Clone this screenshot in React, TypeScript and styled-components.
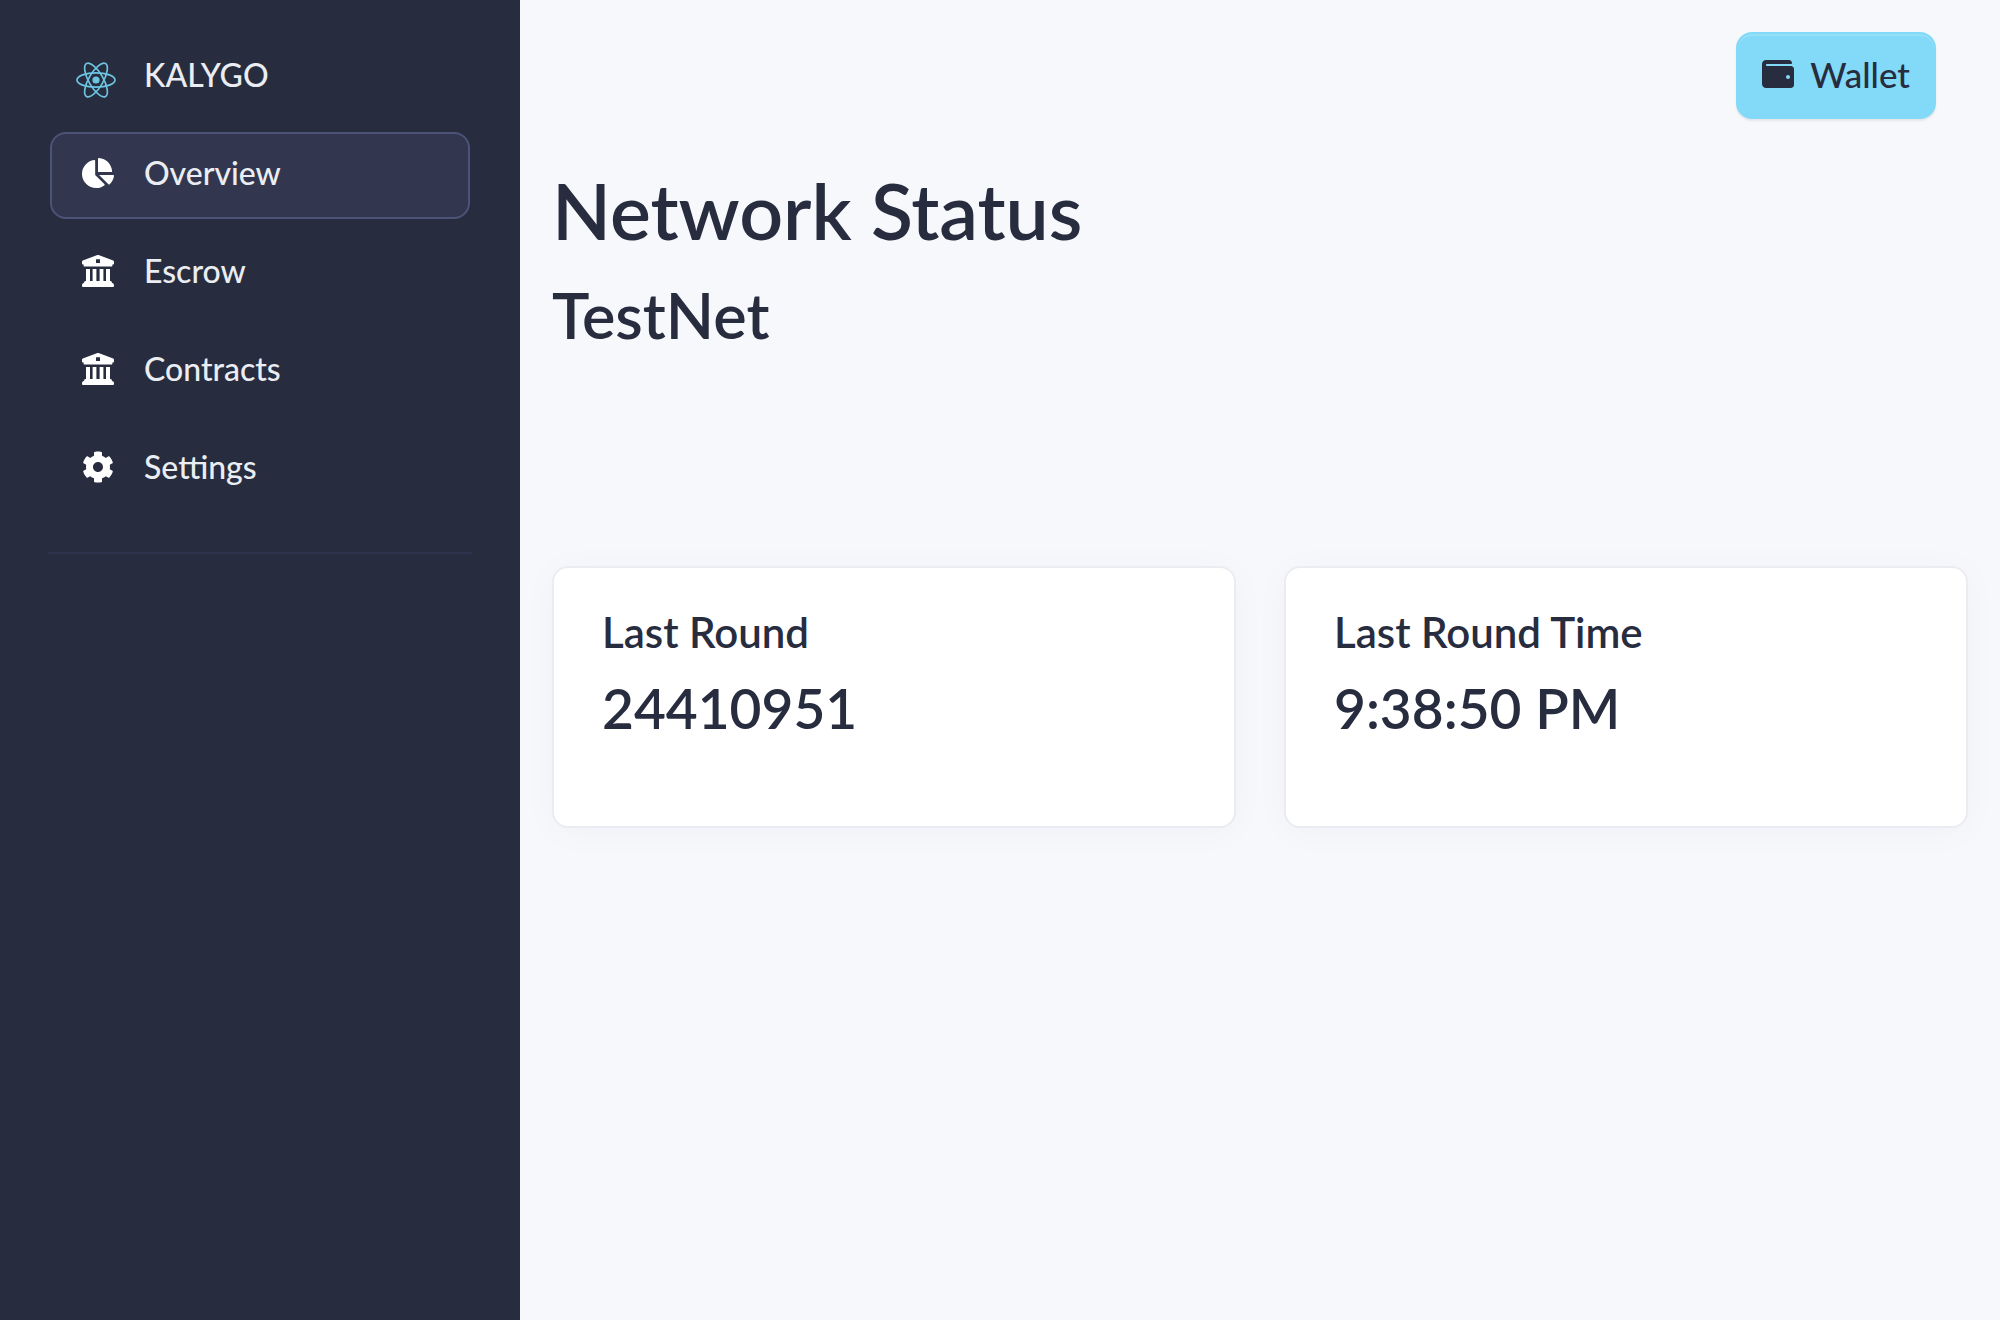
import React from 'react';
import styled, { createGlobalStyle } from 'styled-components';
import { FaChartPie, FaCog, FaWallet } from 'react-icons/fa';

const ink = '#282c3f';

const GlobalStyle = createGlobalStyle`
  *, *::before, *::after { box-sizing: border-box; }
  body {
    margin: 0;
    background: #f6f8fc;
    color: ${ink};
    font-family: Lato, "Open Sans", sans-serif;
  }
  h1, h2, h3, p, ul { margin: 0; padding: 0; }
`;

const Layout = styled.div`
  display: flex;
  min-height: 100vh;
`;

const Sidebar = styled.nav`
  flex: 0 0 520px;
  padding: 34px 48px 0;
  background: ${ink};
`;

const NavList = styled.ul`
  display: flex;
  flex-direction: column;
  gap: 11px;
  padding: 0 2px 39px;
  list-style: none;
`;

const NavLink = styled.a<{ $active?: boolean }>`
  display: flex;
  align-items: center;
  height: 87px;
  padding: 0 22px 6px;
  border: 2px solid ${(p) => (p.$active ? '#4c5379' : 'transparent')};
  border-radius: 16px;
  background: ${(p) => (p.$active ? '#32364f' : 'transparent')};
  color: #eaedf2;
  font-size: 32px;
  font-weight: 500;
  line-height: 48px;
  text-decoration: none;
`;

const IconSlot = styled.span<{ $brand?: boolean }>`
  display: flex;
  flex: 0 0 ${(p) => (p.$brand ? '68px' : '62px')};
  margin-left: ${(p) => (p.$brand ? '2px' : '8px')};
  padding-top: ${(p) => (p.$brand ? '10px' : '0')};
  color: #fff;

  svg {
    display: block;
    width: auto;
    height: ${(p) => (p.$brand ? '40px' : '32px')};
  }
`;

const Divider = styled.hr`
  height: 2px;
  margin: 0;
  border: 0;
  background: #2e344e;
`;

const Main = styled.main`
  flex: 1;
  min-width: 0;
  padding: 32px;
`;

const TopBar = styled.header`
  display: flex;
  justify-content: flex-end;
  padding: 0 32px 40px;
`;

const WalletButton = styled.button`
  display: flex;
  align-items: center;
  gap: 16px;
  height: 87px;
  padding: 0 24px 4px;
  border: 2px solid #83daf8;
  border-radius: 16px;
  background: #83daf8;
  box-shadow: inset 0 2px 0 rgba(255, 255, 255, 0.15), 0 2px 2px rgba(0, 0, 0, 0.075);
  color: ${ink};
  font-family: inherit;
  font-size: 35px;
  font-weight: 500;
  line-height: 48px;

  svg { display: block; font-size: 32px; }
`;

const PageTitle = styled.h1`
  margin-bottom: 12px;
  font-size: 77px;
  font-weight: 600;
  line-height: 102px;
`;

const NetworkName = styled.h2`
  margin-bottom: 209px;
  font-size: 63px;
  font-weight: 600;
  line-height: 84px;
`;

const Cards = styled.section`
  display: grid;
  grid-template-columns: repeat(2, minmax(0, 1fr));
  gap: 48px;
`;

const Card = styled.article`
  min-height: 262px;
  padding: 40px 48px;
  border: 2px solid #ebecf1;
  border-radius: 16px;
  background: #fff;
  box-shadow: 0 4px 36px rgba(40, 44, 63, 0.03);
`;

const CardTitle = styled.h3`
  margin-bottom: 16px;
  font-size: 42px;
  font-weight: 600;
  line-height: 48px;
`;

const CardValue = styled.p`
  font-size: 55px;
  font-weight: 600;
  line-height: 72px;
`;

function ReactLogo() {
  return (
    <svg viewBox="-20 -20 40 40" fill="none" stroke="#6bc4e0" strokeWidth="1.7" aria-hidden="true">
      <circle r="3.6" fill="#6bc4e0" stroke="none" />
      <ellipse rx="19" ry="7.2" />
      <ellipse rx="19" ry="7.2" transform="rotate(60)" />
      <ellipse rx="19" ry="7.2" transform="rotate(120)" />
    </svg>
  );
}

function BankIcon() {
  return (
    <svg viewBox="0 0 32 32" fill="currentColor" aria-hidden="true">
      <path
        fillRule="evenodd"
        d="M15.4.1a1.6 1.6 0 0 1 1.2 0L31.2 5.6Q32 6 32 6.8V8.6Q32 9.6 31 9.6H30.4V10.4Q30.4 11.6 29.2 11.6H2.8Q1.6 11.6 1.6 10.4V9.6H1Q0 9.6 0 8.6V6.8Q0 6 .8 5.6ZM14 4.2V8H18V4.2Z"
      />
      <path d="M4 14H8V26H10.6V14H14.4V26H17.6V14H21.4V26H24V14H28V26H28.4Q29.6 26 29.9 27.2L30 28H30.4Q32 28.4 32 30V31Q32 32 31 32H1Q0 32 0 31V30Q0 28.4 1.6 28H2L2.1 27.2Q2.4 26 3.6 26H4Z" />
    </svg>
  );
}

const links = [
  { label: 'Overview', Icon: FaChartPie, active: true },
  { label: 'Escrow', Icon: BankIcon },
  { label: 'Contracts', Icon: BankIcon },
  { label: 'Settings', Icon: FaCog },
];

const stats = [
  { title: 'Last Round', value: '24410951' },
  { title: 'Last Round Time', value: '9:38:50 PM' },
];

export default function App() {
  return (
    <>
      <GlobalStyle />
      <Layout>
        <Sidebar>
          <NavList>
            <li>
              <NavLink href="#">
                <IconSlot $brand><ReactLogo /></IconSlot>
                KALYGO
              </NavLink>
            </li>
            {links.map(({ label, Icon, active }) => (
              <li key={label}>
                <NavLink href={`#${label.toLowerCase()}`} $active={active} aria-current={active ? 'page' : undefined}>
                  <IconSlot><Icon /></IconSlot>
                  {label}
                </NavLink>
              </li>
            ))}
          </NavList>
          <Divider />
        </Sidebar>
        <Main>
          <TopBar>
            <WalletButton type="button">
              <FaWallet aria-hidden="true" />
              Wallet
            </WalletButton>
          </TopBar>
          <PageTitle>Network Status</PageTitle>
          <NetworkName>TestNet</NetworkName>
          <Cards>
            {stats.map((stat) => (
              <Card key={stat.title}>
                <CardTitle>{stat.title}</CardTitle>
                <CardValue>{stat.value}</CardValue>
              </Card>
            ))}
          </Cards>
        </Main>
      </Layout>
    </>
  );
}
